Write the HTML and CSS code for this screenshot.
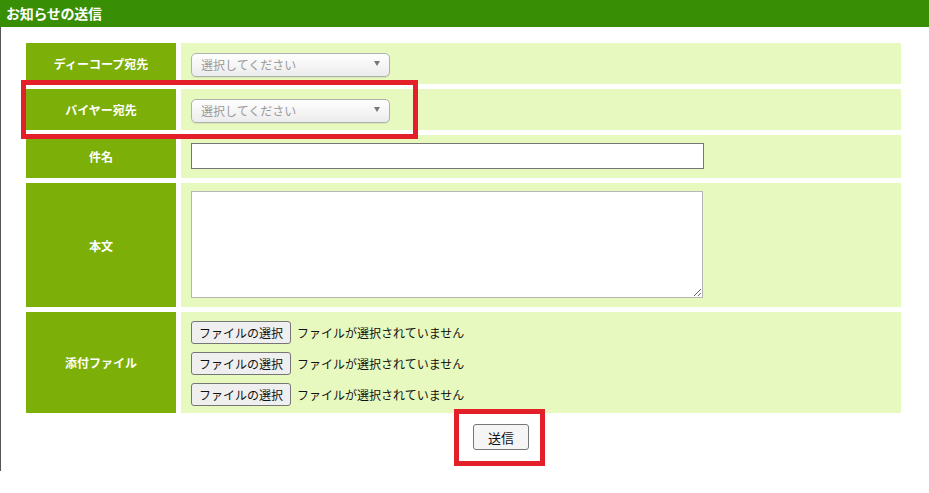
FILE: index.html
```html
<!DOCTYPE html>
<html lang="ja">
<head>
<meta charset="utf-8">
<title>お知らせの送信</title>
<link rel="stylesheet" href="styles.css">
</head>
<body>
<div class="titlebar">お知らせの送信</div>
<div class="content">
  <div class="form-grid">
    <div class="label">ディーコープ宛先</div>
    <div class="field">
      <div class="select"><select><option>選択してください</option></select></div>
    </div>
    <div class="label">バイヤー宛先</div>
    <div class="field">
      <div class="select"><select><option>選択してください</option></select></div>
    </div>
    <div class="label">件名</div>
    <div class="field field-input">
      <input class="text" type="text">
    </div>
    <div class="label">本文</div>
    <div class="field field-area">
      <textarea class="area"></textarea>
    </div>
    <div class="label">添付ファイル</div>
    <div class="field field-files">
      <div class="file-line"><span class="file-btn">ファイルの選択</span><span class="file-text">ファイルが選択されていません</span></div>
      <div class="file-line"><span class="file-btn">ファイルの選択</span><span class="file-text">ファイルが選択されていません</span></div>
      <div class="file-line"><span class="file-btn">ファイルの選択</span><span class="file-text">ファイルが選択されていません</span></div>
    </div>
  </div>
  <div class="actions">
    <button class="submit" type="button">送信</button>
  </div>
</div>
<div class="mark mark-buyer"></div>
<div class="mark mark-submit"></div>
</body>
</html>
```

FILE: styles.css
```css
html, body {
  margin: 0;
  padding: 0;
  background: #ffffff;
  font-family: "Noto Sans CJK JP", "Noto Sans", sans-serif;
}

.titlebar {
  height: 27px;
  line-height: 27px;
  background: #388e04;
  color: #ffffff;
  font-weight: bold;
  font-size: 14px;
  padding-left: 6px;
  letter-spacing: -0.3px;
}

.content {
  border-left: 1px solid #555555;
  padding: 16px 0 21px 25px;
}

.form-grid {
  display: grid;
  grid-template-columns: 150px 720px;
  gap: 5px;
}

.label {
  background: #7caf08;
  color: #ffffff;
  font-weight: bold;
  font-size: 12px;
  display: flex;
  align-items: center;
  justify-content: center;
}

.field {
  background: #e7f9bf;
  padding: 8px 10px 9px;
  display: flex;
  align-items: flex-start;
}

.select {
  position: relative;
  width: 199px;
  height: 24px;
}

.select select {
  appearance: none;
  -webkit-appearance: none;
  box-sizing: border-box;
  width: 199px;
  height: 24px;
  margin: 0;
  padding: 0 0 0 9px;
  border: 1px solid #b0b0b0;
  border-radius: 5px;
  background: linear-gradient(#ffffff, #ececec);
  box-shadow: 0 1px 1px rgba(0, 0, 0, 0.08);
  color: #9a9a9a;
  font-family: "Noto Sans CJK JP", "Noto Sans", sans-serif;
  font-size: 12px;
  outline: none;
}

.select::after {
  content: "";
  position: absolute;
  right: 10px;
  top: 10px;
  border-left: 3.5px solid transparent;
  border-right: 3.5px solid transparent;
  border-top: 5px solid #777777;
  pointer-events: none;
}

.text {
  box-sizing: border-box;
  width: 513px;
  height: 26px;
  margin: 0;
  border: 1px solid #767676;
  border-radius: 0;
  background: #ffffff;
  padding: 2px 4px;
}

.area {
  box-sizing: border-box;
  width: 512px;
  height: 107px;
  margin: 0;
  border: 1px solid #b5b5b5;
  background: #ffffff;
  display: block;
}

.field-files {
  flex-direction: column;
  gap: 8px;
  padding: 9px 10px 7px;
}

.file-line {
  display: flex;
  align-items: center;
  height: 23px;
}

.file-btn {
  box-sizing: border-box;
  width: 100px;
  height: 23px;
  display: flex;
  align-items: center;
  justify-content: center;
  border: 1px solid #767676;
  border-radius: 3px;
  background: #efefef;
  color: #111111;
  font-size: 12px;
}

.file-text {
  margin-left: 6px;
  font-size: 12px;
  color: #111111;
}

.actions {
  display: flex;
  margin-top: 11px;
  padding-left: 447px;
}

.submit {
  box-sizing: border-box;
  width: 56px;
  height: 26px;
  margin: 0;
  padding: 0;
  border: 1px solid #767676;
  border-radius: 3px;
  background: #f5f5f5;
  color: #111111;
  font-family: "Noto Sans CJK JP", "Noto Sans", sans-serif;
  font-size: 13px;
}

.mark {
  position: absolute;
  box-sizing: border-box;
  border: 5px solid #e3202a;
  pointer-events: none;
}

.mark-buyer {
  left: 21px;
  top: 80px;
  width: 397px;
  height: 59px;
}

.mark-submit {
  left: 454px;
  top: 409px;
  width: 91px;
  height: 57px;
}
```
